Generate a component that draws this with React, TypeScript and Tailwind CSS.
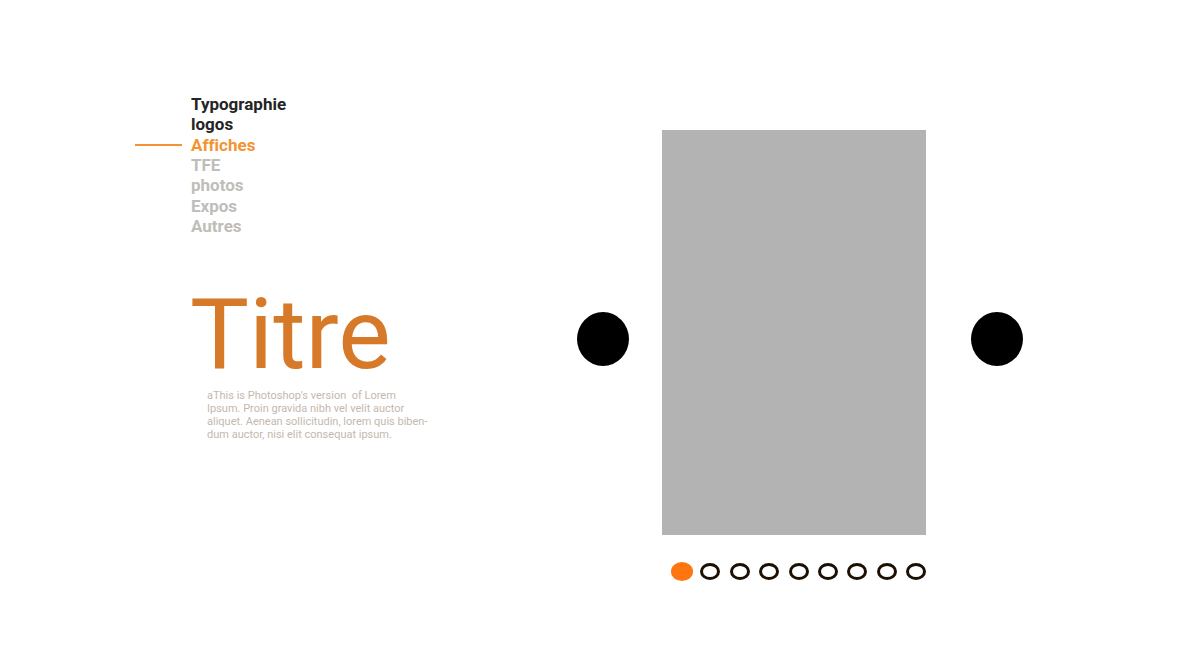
import { useState } from 'react';

const categories = [
  { label: 'Typographie', tone: 'text-[#242424]' },
  { label: 'logos', tone: 'text-[#242424]' },
  { label: 'Affiches', tone: 'text-[#f39333]' },
  { label: 'TFE', tone: 'text-[#bfbdb9]' },
  { label: 'photos', tone: 'text-[#bfbdb9]' },
  { label: 'Expos', tone: 'text-[#bfbdb9]' },
  { label: 'Autres', tone: 'text-[#bfbdb9]' },
];

const slides = [0, 1, 2, 3, 4, 5, 6, 7, 8];

export default function App() {
  const [slide, setSlide] = useState(0);
  const move = (step: number) => setSlide((slide + step + slides.length) % slides.length);

  return (
    <div className="flex min-h-screen bg-white font-['Roboto',sans-serif]">
      <section className="w-[577px] shrink-0 pt-[94px] pl-[135px]">
        <nav aria-label="Catégories">
          <ul className="flex h-[142px] flex-col justify-between [font-variant-ligatures:none]">
            {categories.map(({ label, tone }) => (
              <li key={label} className="flex items-center gap-[9px] text-[17px] leading-[20px] font-bold">
                <span className={label === 'Affiches' ? 'h-[2px] w-[47px] bg-[#f39333]' : 'h-[2px] w-[47px]'} />
                <a href={`#${label}`} className={tone}>{label}</a>
              </li>
            ))}
          </ul>
        </nav>
        <div className="pt-[44px] pl-[55px]">
          <h1 className="text-[99px] leading-[109px] text-[#d67a2a]">Titre</h1>
          <p className="pl-[17px] text-[11px] leading-[13px] text-[#c4b8ae]">
            aThis is Photoshop's version &nbsp;of Lorem<br />
            Ipsum. Proin gravida nibh vel velit auctor<br />
            aliquet. Aenean sollicitudin, lorem quis biben-<br />
            dum auctor, nisi elit consequat ipsum.
          </p>
        </div>
      </section>
      <main className="pt-[130px]">
        <div className="flex items-center">
          <button type="button" aria-label="Précédent" onClick={() => move(-1)} className="mt-[13px] h-[54px] w-[52px] rounded-[50%] bg-black" />
          <div className="mr-[45px] ml-[33px] h-[405px] w-[264px] bg-[#b3b3b3]" />
          <button type="button" aria-label="Suivant" onClick={() => move(1)} className="mt-[13px] h-[54px] w-[52px] rounded-[50%] bg-black" />
        </div>
        <div className="mt-[27px] ml-[94px] flex h-[19px] w-[255px] items-center justify-between">
          {slides.map((index) => (
            <button
              key={index}
              type="button"
              aria-label={`Affiche ${index + 1}`}
              onClick={() => setSlide(index)}
              className={
                index === slide
                  ? '-mr-[2px] h-[19px] w-[22px] rounded-[50%] bg-[#ff750f]'
                  : 'h-[17px] w-[20px] rounded-[50%] border-3 border-[#1c1005] bg-white'
              }
            />
          ))}
        </div>
      </main>
    </div>
  );
}
